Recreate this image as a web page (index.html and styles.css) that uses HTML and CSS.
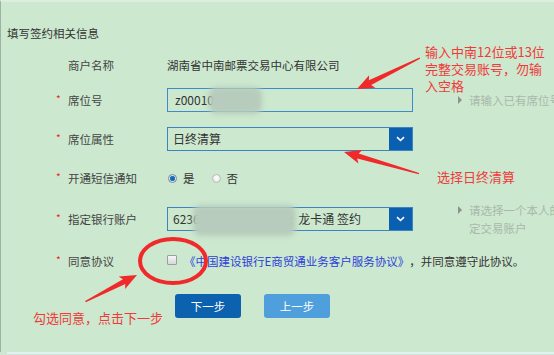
FILE: index.html
```html
<!DOCTYPE html>
<html lang="zh-CN">
<head>
    <meta charset="UTF-8">
    <meta name="viewport" content="width=device-width, initial-scale=1.0">
    <title>填写签约相关信息</title>
    <link rel="stylesheet" href="styles.css">
</head>
<body>
    <div class="panel">
        <div class="panel-title">填写签约相关信息</div>

        <div class="form">
            <div class="row row-info">
                <span class="star"></span>
                <span class="label">商户名称</span>
                <span class="value">湖南省中南邮票交易中心有限公司</span>
            </div>

            <div class="row">
                <span class="star">*</span>
                <span class="label">席位号</span>
                <div class="input">z0001012</div>
                <div class="hint"><i class="tri"></i><span class="hint-text">请输入已有席位号</span></div>
            </div>

            <div class="row">
                <span class="star">*</span>
                <span class="label">席位属性</span>
                <div class="select">
                    <span class="select-text">日终清算</span>
                    <span class="select-btn">
                        <svg width="9" height="6" viewBox="0 0 9 6"><path d="M1 1.2 L4.5 4.5 L8 1.2" fill="none" stroke="#fff" stroke-width="1.6"/></svg>
                    </span>
                </div>
            </div>

            <div class="row row-radio">
                <span class="star">*</span>
                <span class="label">开通短信通知</span>
                <label class="radio"><i class="dot checked"></i>是</label>
                <label class="radio"><i class="dot"></i>否</label>
            </div>

            <div class="row row-bank">
                <span class="star">*</span>
                <span class="label">指定银行账户</span>
                <div class="select">
                    <span class="select-text">623668123456789012&nbsp; 龙卡通 签约</span>
                    <span class="select-btn">
                        <svg width="9" height="6" viewBox="0 0 9 6"><path d="M1 1.2 L4.5 4.5 L8 1.2" fill="none" stroke="#fff" stroke-width="1.6"/></svg>
                    </span>
                </div>
                <div class="hint"><i class="tri"></i><span class="hint-text wrap">请选择一个本人的指定交易账户</span></div>
            </div>

            <div class="row row-agree">
                <span class="star">*</span>
                <span class="label">同意协议</span>
                <i class="checkbox"></i>
                <a class="agree-link" href="#">《中国建设银行E商贸通业务客户服务协议》</a>
                <span class="agree-text">，并同意遵守此协议。</span>
            </div>

            <div class="actions">
                <button class="btn btn-next">下一步</button>
                <button class="btn btn-prev">上一步</button>
            </div>
        </div>

        <!-- blurred account numbers -->
        <div class="blur blur-seat"></div>
        <div class="blur blur-bank"></div>

        <!-- red annotations -->
        <div class="note note-seat">输入中南12位或13位<br>完整交易账号，勿输<br>入空格</div>
        <div class="note note-type">选择日终清算</div>
        <div class="note note-agree">勾选同意，点击下一步</div>

        <svg class="marks" width="554" height="352" viewBox="0 0 554 352">
            <g fill="#f02a2a">
                <polygon transform="translate(357 89) rotate(-26.2)" points="0,0 17,-7 14.5,-2.6 70,-0.6 70,0.6 14.5,2.6 17,7"/>
                <polygon transform="translate(344 152) rotate(16.1)" points="0,0 17,-7 14.5,-2.6 78,-0.6 78,0.6 14.5,2.6 17,7"/>
                <polygon transform="translate(137 275) rotate(152.7)" points="0,0 17,-7 14.5,-2.6 58,-0.6 58,0.6 14.5,2.6 17,7"/>
            </g>
            <ellipse cx="173" cy="261" rx="33" ry="22" fill="none" stroke="#f02a2a" stroke-width="4"/>
        </svg>
    </div>
    <div class="next-panel"></div>
</body>
</html>
```

FILE: styles.css
```css
html, body {
    margin: 0;
    overflow: hidden;
}

body {
    background-color: #cce8cf;
    font-family: "Noto Sans CJK SC", "DejaVu Sans", sans-serif;
    font-size: 11.5px;
    color: #3a3a3a;
}

.panel {
    position: relative;
    height: 350px;
    border-left: 1px solid #9fb1a2;
    border-top: 2px solid #dcefdf;
    box-sizing: content-box;
}

.next-panel {
    margin-left: 7px;
    height: 10px;
    border-top: 2px solid #e4eff7;
}

.panel-title {
    padding: 23px 0 0 6px;
    line-height: 16px;
    color: #333;
}

.form {
    margin-top: 12px;
    padding-left: 55px;
}

.row {
    display: flex;
    align-items: center;
    height: 24px;
    margin-bottom: 15px;
    white-space: nowrap;
}

.row-info { margin-bottom: 11px; }
.row-radio { margin-bottom: 17px; }
.row-bank { margin-bottom: 18px; }
.row-agree { margin-bottom: 21px; }

.star {
    flex-shrink: 0;
    width: 12px;
    color: #ee2222;
    font-size: 10px;
    line-height: 10px;
    padding-bottom: 2px;
}

.label {
    flex-shrink: 0;
    width: 99px;
    color: #444;
}

.value {
    color: #333;
}

.input {
    flex-shrink: 0;
    width: 246px;
    height: 24px;
    box-sizing: border-box;
    border: 1px solid #3f8bc9;
    padding-left: 7px;
    line-height: 22px;
    font-size: 12px;
    color: #333;
}

.select {
    flex-shrink: 0;
    display: flex;
    width: 246px;
    height: 24px;
    box-sizing: border-box;
    border: 1px solid #3a84c4;
}

.select-text {
    flex: 1;
    padding-left: 5px;
    line-height: 22px;
    font-size: 12px;
    color: #333;
    overflow: hidden;
}

.select-btn {
    width: 23px;
    display: flex;
    align-items: center;
    justify-content: center;
    background-color: #0b5fb1;
}

.hint {
    flex-shrink: 0;
    display: flex;
    align-items: flex-start;
    margin-left: 45px;
    color: #a9b8ab;
}

.tri {
    width: 0;
    height: 0;
    margin-top: 5px;
    margin-right: 7px;
    border-top: 4px solid transparent;
    border-bottom: 4px solid transparent;
    border-left: 4px solid #8c918d;
}

.hint-text {
    line-height: 18px;
}

.hint-text.wrap {
    width: 106px;
    white-space: normal;
}

.radio {
    display: flex;
    align-items: center;
    margin-left: 1px;
    margin-right: 16px;
    color: #333;
}

.dot {
    width: 9px;
    height: 9px;
    box-sizing: border-box;
    border-radius: 50%;
    border: 1px solid #b7bcb8;
    background: radial-gradient(circle at 50% 40%, #ffffff, #dfe3e0);
    margin-right: 6px;
}

.dot.checked {
    border-color: #7a8a96;
    background: radial-gradient(circle, #0f5aa8 0, #2a7fc8 2.5px, #dfe6ea 3px);
}

.checkbox {
    width: 10px;
    height: 10px;
    box-sizing: border-box;
    border: 1px solid #9aa09b;
    border-radius: 1px;
    background: linear-gradient(#f6f7f6, #d6d9d7);
    margin-right: 7px;
    margin-top: -2px;
}

.agree-link {
    color: #2c3fd8;
    text-decoration: none;
}

.agree-text {
    color: #333;
}

.actions {
    display: flex;
    gap: 23px;
    padding-left: 119px;
}

.btn {
    width: 66px;
    height: 24px;
    border: none;
    border-radius: 3px;
    color: #fff;
    font-family: inherit;
    font-size: 11.5px;
    padding: 0;
    cursor: pointer;
}

.btn-next { background-color: #0c62ae; }
.btn-prev { background-color: #4f9fdc; }

.blur {
    position: absolute;
    background-color: #b7ccbc;
    filter: blur(2.5px);
    border-radius: 8px;
}

.blur-seat {
    left: 208px;
    top: 85px;
    width: 53px;
    height: 27px;
}

.blur-bank {
    left: 192px;
    top: 203px;
    width: 103px;
    height: 31px;
}

.note {
    position: absolute;
    color: #f03a3a;
    font-size: 13px;
    line-height: 17px;
    white-space: nowrap;
}

.note-seat { left: 424px; top: 41px; }
.note-type { left: 436px; top: 166px; }
.note-agree { left: 32px; top: 307px; }

.marks {
    position: absolute;
    left: -1px;
    top: -2px;
    pointer-events: none;
}
```
